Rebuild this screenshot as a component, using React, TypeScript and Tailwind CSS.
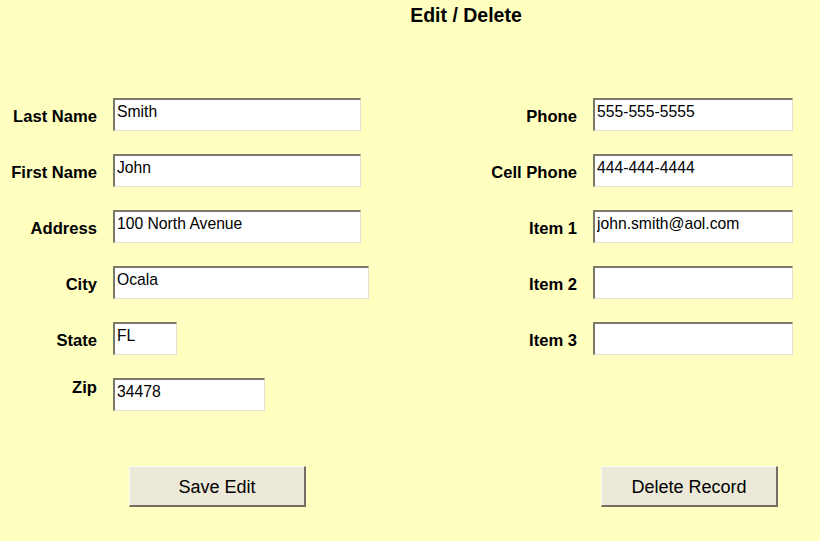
import React from "react";

type Field = { label: string; value: string; width: string; topLabel?: boolean };

const left: Field[] = [
  { label: "Last Name", value: "Smith", width: "w-[248px]" },
  { label: "First Name", value: "John", width: "w-[248px]" },
  { label: "Address", value: "100 North Avenue", width: "w-[248px]" },
  { label: "City", value: "Ocala", width: "w-[256px]" },
  { label: "State", value: "FL", width: "w-[64px]" },
  { label: "Zip", value: "34478", width: "w-[152px]", topLabel: true },
];

const right: Field[] = [
  { label: "Phone", value: "555-555-5555", width: "w-[200px]" },
  { label: "Cell Phone", value: "444-444-4444", width: "w-[200px]" },
  { label: "Item 1", value: "john.smith@aol.com", width: "w-[200px]" },
  { label: "Item 2", value: "", width: "w-[200px]" },
  { label: "Item 3", value: "", width: "w-[200px]" },
];

function Row({ field }: { field: Field }) {
  return (
    <div className="flex h-[33px] items-center">
      <label
        className={
          "w-[113px] pr-[16px] text-right text-[16.6px] font-bold leading-[18px] text-black " +
          (field.topLabel ? "self-start pt-[1px]" : "pt-[5px]")
        }
      >
        {field.label}
      </label>
      <input
        type="text"
        defaultValue={field.value}
        className={
          field.width +
          " h-[33px] bg-white border-t-2 border-l-2 border-b border-r border-t-[#7a7868] border-l-[#7a7868] border-b-[#e4e2d8] border-r-[#e4e2d8] pl-[2px] pb-[9px] pt-[2px] text-[15.7px] leading-[18px] text-black outline-none"
        }
      />
    </div>
  );
}

function Btn({ children }: { children: React.ReactNode }) {
  return (
    <button className="w-[177px] h-[41px] bg-[#ece9d8] border-t border-l border-b-2 border-r-2 border-t-[#fbfaf4] border-l-[#fbfaf4] border-b-[#716f64] border-r-[#716f64] pt-[2px] text-[18px] text-black">
      {children}
    </button>
  );
}

export default function App() {
  return (
    <div className="w-[820px] h-[541px] bg-[#ffffc0] font-['Liberation_Sans',Arial,sans-serif] overflow-hidden">
      <div className="flex justify-center pl-[112px] pt-[3px]">
        <h1 className="text-[19.5px] font-bold leading-[24px] text-black">Edit / Delete</h1>
      </div>

      <div className="grid grid-cols-[480px_340px] mt-[71px]">
        <div className="flex flex-col gap-[23px]">
          {left.map((f) => (
            <Row key={f.label} field={f} />
          ))}
        </div>
        <div className="flex flex-col gap-[23px]">
          {right.map((f) => (
            <Row key={f.label} field={f} />
          ))}
        </div>
      </div>

      <div className="flex gap-[295px] pl-[129px] mt-[55px]">
        <Btn>Save Edit</Btn>
        <Btn>Delete Record</Btn>
      </div>
    </div>
  );
}
